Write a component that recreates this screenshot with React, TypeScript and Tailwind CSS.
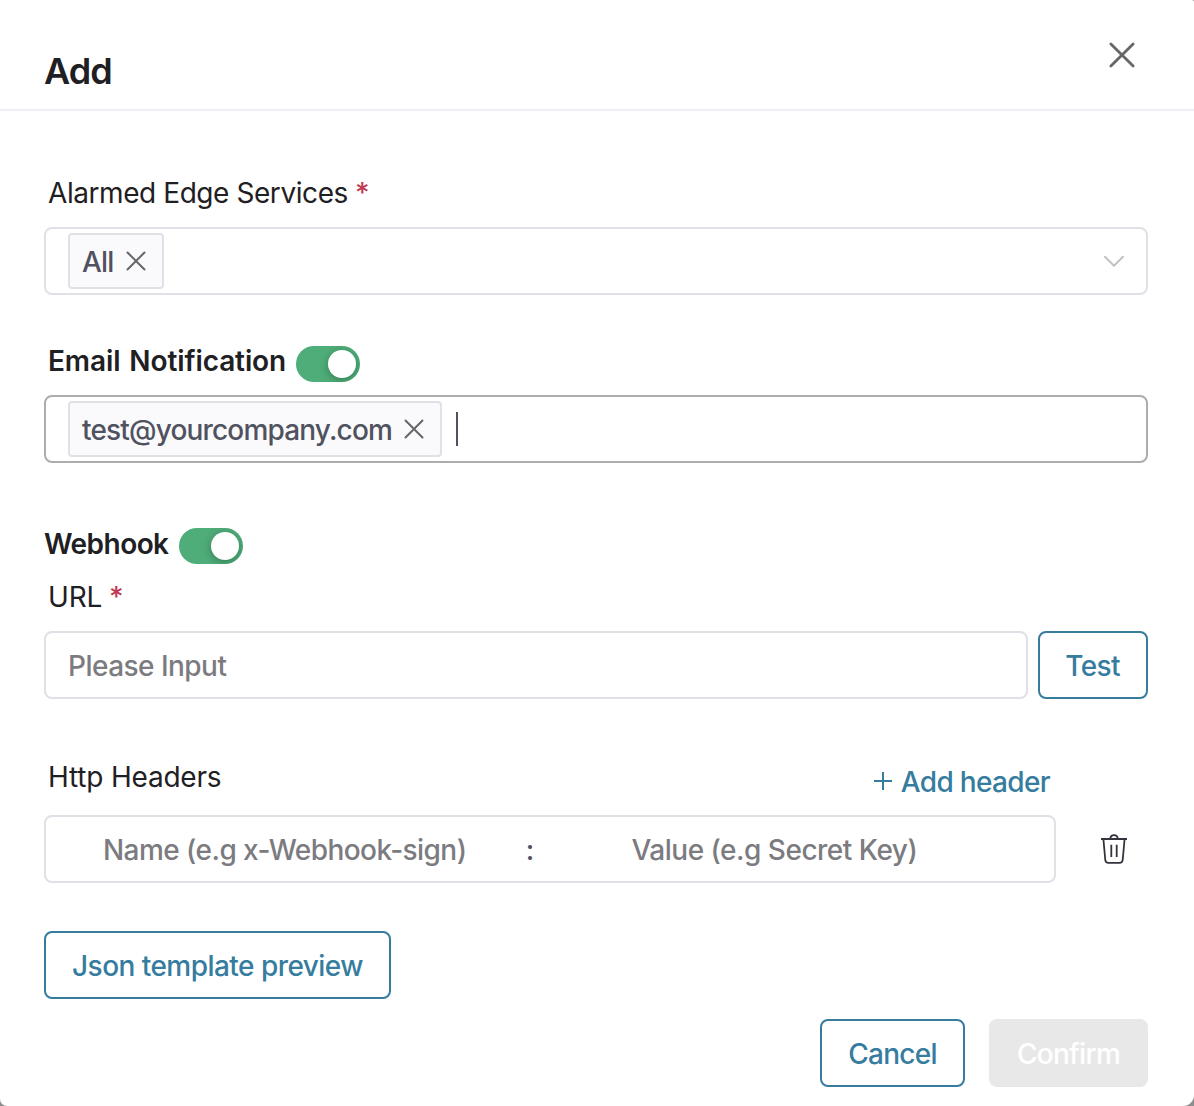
import type { ReactNode } from 'react';

function Cross({ size, stroke, width }: { size: number; stroke: string; width: number }) {
  const e = size - width / 2 - 0.5;
  const s = width / 2 + 0.5;
  return (
    <svg width={size} height={size} viewBox={`0 0 ${size} ${size}`} fill="none" stroke={stroke} strokeWidth={width} strokeLinecap="round" className="shrink-0">
      <path d={`M${s} ${s}L${e} ${e}M${e} ${s}L${s} ${e}`} />
    </svg>
  );
}

function Toggle() {
  return (
    <button className="flex h-9 w-16 shrink-0 items-center justify-end overflow-hidden rounded-full bg-[#4fad79] pr-1">
      <span className="size-7 rounded-full bg-white shadow-[0_2px_8px_rgba(0,35,11,0.35)]" />
    </button>
  );
}

function Tag({ children, className }: { children: ReactNode; className: string }) {
  return (
    <span className={`flex h-14 items-center justify-between rounded-sm border-2 border-[#e0e0e6] bg-[#fafafc] pr-4 pl-3 font-[450] text-[#51525f] ${className}`}>
      {children}
      <Cross size={20} stroke="#666" width={2} />
    </span>
  );
}

function Required() {
  return <span className="ml-[7px] font-medium tracking-normal text-[#c0384f]">*</span>;
}

export default function App() {
  return (
    <div className="h-[1106px] w-[1194px] overflow-hidden bg-[#8f8f8f]">
      <div className="flex h-full flex-col rounded-tr-[2px] rounded-br-[11px] rounded-bl-[7px] bg-white font-['Inter',sans-serif] text-[28px] leading-10 whitespace-nowrap text-[#1f2023]">
        <header className="flex h-[111px] shrink-0 items-start justify-between border-b-2 border-[#efeff5] pr-[59px] pl-11">
          <h1 className="mt-[47px] text-[36px] leading-[48px] font-semibold tracking-[-0.9px]">Add</h1>
          <button className="mt-[42px]"><Cross size={26} stroke="#666" width={2.8} /></button>
        </header>

        <main className="flex flex-col pr-[46px] pl-11">
          <label className="mt-[62px] h-10 pl-1"><span className="tracking-[-0.43px]">Alarmed Edge Services</span><Required /></label>
          <div className="mt-3.5 flex h-17 items-center justify-between rounded-lg border-2 border-[#e0e0e6] px-[22px]">
            <Tag className="w-24"><span className="pt-0.5 tracking-[-0.8px]">All</span></Tag>
            <svg width="20" height="12" viewBox="0 0 20 12" fill="none" stroke="#c2c2c2" strokeWidth="2" strokeLinecap="round" strokeLinejoin="round">
              <path d="M1 1.7L10 10.7L19 1.7" />
            </svg>
          </div>

          <div className="mt-[46px] flex h-[42px] pl-1 font-semibold">
            <span className="w-[248px] tracking-[-0.1px] [word-spacing:2px]">Email Notification</span>
            <div className="mt-[5px]"><Toggle /></div>
          </div>
          <div className="mt-3 flex h-17 items-center rounded-lg border-2 border-[#adadad] pl-[22px]">
            <Tag className="w-[374px]"><span className="pt-0.5 tracking-[-0.83px]">test@yourcompany.com</span></Tag>
            <span className="ml-3.5 h-[34px] w-0.5 bg-[#51525f]" />
          </div>

          <div className="mt-[61px] flex h-[42px] font-semibold">
            <span className="w-[135px] tracking-[-0.55px]">Webhook</span>
            <div className="mt-1"><Toggle /></div>
          </div>
          <label className="mt-[11px] h-10 pl-1"><span className="tracking-[-0.2px]">URL</span><Required /></label>
          <div className="mt-3.5 flex h-17 gap-2.5">
            <div className="flex flex-1 items-center rounded-lg border-2 border-[#e0e0e6] pt-0.5 pl-[22px] text-[#7b7b80]"><span className="font-[450] tracking-[-0.53px]">Please Input</span></div>
            <button className="w-[110px] rounded-lg border-2 border-[#367c9f] pt-0.5 pr-px text-[#367c9f]"><span className="font-medium tracking-[-0.65px]">Test</span></button>
          </div>

          <div className="mt-[58px] flex h-[45px] justify-between pr-[98px] pl-1">
            <span className="tracking-[-0.2px]">Http Headers</span>
            <button className="mt-[5px] flex h-10 items-center gap-[9px] text-[#367c9f]">
              <svg width="18" height="18" viewBox="0 0 18 18" stroke="currentColor" strokeWidth="2" className="mb-0.5"><path d="M0 9H18M9 0V18" /></svg>
              <span className="font-medium tracking-[-0.65px]">Add header</span>
            </button>
          </div>
          <div className="mt-[13px] flex h-17 items-center">
            <div className="flex h-full w-[1012px] items-center rounded-lg border-2 border-[#e0e0e6] pt-0.5 font-[450] text-[#7b7b80]">
              <span className="w-[422px] pl-[57px] tracking-[-0.56px]">Name (e.g x-Webhook-sign)</span>
              <span className="w-[124px] text-center text-[#51525f]">:</span>
              <span className="pl-[39.5px] tracking-[-0.5px]">Value (e.g Secret Key)</span>
            </div>
            <button className="ml-[45px]">
              <svg width="26" height="30" viewBox="0 0 26 30" fill="none" stroke="#33343d" strokeWidth="1.8">
                <path d="M0 5H26M9.3 5C9.3 -.3 16.7 -.3 16.7 5M2.4 5L4.3 26Q4.6 28.9 7.4 28.9H18.6Q21.4 28.9 21.7 26L23.6 5M10.3 10.7V23M15.7 10.7V23" />
              </svg>
            </button>
          </div>
          <button className="mt-12 h-17 w-[347px] rounded-lg border-2 border-[#367c9f] pt-0.5 text-[#367c9f]"><span className="font-medium tracking-[-0.54px]">Json template preview</span></button>
        </main>

        <footer className="mt-5 flex justify-end gap-6 pr-[46px]">
          <button className="h-17 w-[145px] rounded-lg border-2 border-[#367c9f] pt-0.5 text-[#367c9f]"><span className="font-medium tracking-[-0.7px]">Cancel</span></button>
          <button className="h-17 w-[159px] rounded-lg bg-[#e8e8e8] pt-0.5 text-white"><span className="font-medium tracking-[-0.7px]">Confirm</span></button>
        </footer>
      </div>
    </div>
  );
}
